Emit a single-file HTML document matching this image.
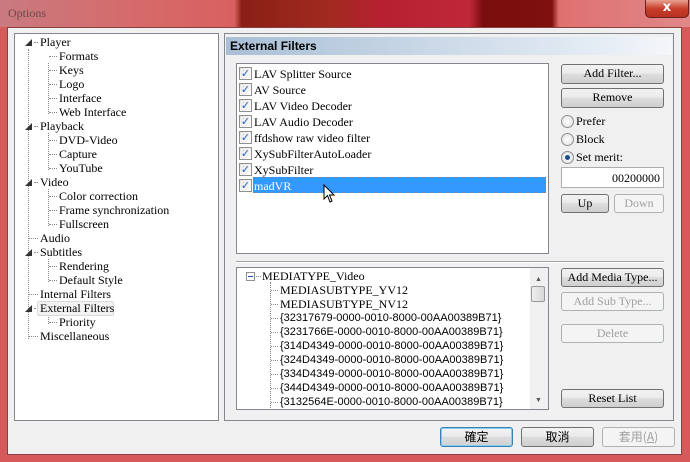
<!DOCTYPE html>
<html><head><meta charset="utf-8"><style>
*{margin:0;padding:0;box-sizing:border-box}
body{width:690px;height:462px;overflow:hidden;position:relative;font-family:"Liberation Serif","Noto Serif CJK SC",serif;font-size:12px;color:#000;background:#d65a5a}
.a{position:absolute}
.title{left:0;top:0;width:690px;height:27px;background:linear-gradient(90deg,#c97a80 0%,#d66a6a 20%,#d86060 34%,#8a1f16 35%,#a22a20 48%,#b52030 55%,#c02838 68%,#7a0d0d 70%,#801010 80%,#e07070 81%,#e08888 100%)}
.client{left:7px;top:27px;width:675px;height:428px;background:#f0f0f0;border:1px solid #8a4040}
.box{background:#fff;border:1px solid #828790}
.t{position:absolute;white-space:nowrap;line-height:14px}
.btn{position:absolute;border:1px solid #707070;border-radius:3px;background:linear-gradient(#f2f2f2 0%,#ebebeb 45%,#dddddd 50%,#cfcfcf 100%);text-align:center;line-height:17px;font-size:12px}
.dis{border-color:#adb2b5;background:#f4f4f4;color:#a0a0a0}
.cb{position:absolute;width:13px;height:13px;border:1px solid #8e8f8f;background:linear-gradient(135deg,#e6e6e6,#fff);font-size:11px;line-height:11px;color:#2c5fb8;text-align:center;font-weight:bold;font-family:"DejaVu Sans",sans-serif}
.rd{position:absolute;width:13px;height:13px;border-radius:50%;border:1px solid #8e8f8f;background:radial-gradient(#fff,#ddd)}
.dot{border-left:1px dotted #888}
.h{border-top:1px dotted #888;height:0}
</style></head><body>
<div class="a title"></div>
<div class="t" style="left:8px;top:6px;color:#6a4848;font-size:12px">Options</div>
<div class="a" style="left:645px;top:0;width:44px;height:18px;border:1px solid #6a2020;border-top:none;border-radius:0 0 5px 5px;background:linear-gradient(#e8a090,#c8402a 50%,#b83020);color:#fff;text-align:center;font:bold 13px 'DejaVu Sans',sans-serif;line-height:16px">x</div>
<div class="a client"></div>

<!-- left tree -->
<div class="a box" style="left:14px;top:33px;width:205px;height:388px"></div>
<div class="a dot" style="left:28px;top:49px;height:290px"></div>
<div class="a dot" style="left:48px;top:63px;height:51px"></div>
<div class="a dot" style="left:48px;top:133px;height:37px"></div>
<div class="a dot" style="left:48px;top:189px;height:37px"></div>
<div class="a dot" style="left:48px;top:259px;height:23px"></div>
<div class="a dot" style="left:48px;top:315px;height:9px"></div>
<div id="tree"></div>

<!-- right panel -->
<div class="a" style="left:224px;top:33px;width:450px;height:388px;border:1px solid #828790;background:#f0f0f0"></div>
<div class="a" style="left:226px;top:37px;width:446px;height:18px;background:linear-gradient(90deg,#a9bfd6,#e6edf5 85%,#f4f6f9)"></div>
<div class="t" style="left:230px;top:39px;font:bold 12px 'Liberation Sans',sans-serif">External Filters</div>

<div class="a box" style="left:236px;top:63px;width:313px;height:191px"></div>
<div class="a" style="left:253px;top:177px;width:293px;height:16px;background:#3399ff;border:1px dotted #d07020"></div>
<div id="list"></div>
<svg class="a" style="left:323px;top:184px" width="12" height="20" viewBox="0 0 12 20"><path d="M1 1 L1 15 L4.5 11.5 L7 18 L9 17 L6.5 11 L11 11 Z" fill="#fff" stroke="#000" stroke-width="1"/></svg>

<div class="a" style="left:236px;top:261px;width:428px;height:1px;background:#a0a0a0"></div>
<div class="a" style="left:236px;top:262px;width:428px;height:1px;background:#fff"></div>

<div class="a box" style="left:236px;top:267px;width:313px;height:143px"></div>
<div class="a" style="left:530px;top:268px;width:18px;height:141px;background:#f0f0f0"></div>
<div class="a" style="left:531px;top:286px;width:14px;height:16px;border:1px solid #999;border-radius:2px;background:linear-gradient(90deg,#eee,#d8d8d8)"></div>
<div class="t" style="left:535px;top:272px;font-size:7px;color:#555">▲</div>
<div class="t" style="left:535px;top:393px;font-size:7px;color:#555">▼</div>
<div class="a" style="left:246px;top:272px;width:9px;height:9px;border:1px solid #919191;background:#fff"></div>
<div class="a" style="left:248px;top:276px;width:5px;height:1px;background:#2050a0"></div>
<div class="a dot" style="left:270px;top:282px;height:128px"></div>
<div id="sub"></div>

<div class="btn" style="left:561px;top:64px;width:103px;height:20px">Add Filter...</div>
<div class="btn" style="left:561px;top:88px;width:103px;height:20px">Remove</div>
<div class="rd" style="left:561px;top:115px"></div><div class="t" style="left:576px;top:114px">Prefer</div>
<div class="rd" style="left:561px;top:133px"></div><div class="t" style="left:576px;top:132px">Block</div>
<div class="rd" style="left:561px;top:151px"></div><div class="a" style="left:565px;top:155px;width:5px;height:5px;border-radius:50%;background:#1a4f8f"></div><div class="t" style="left:576px;top:150px">Set merit:</div>
<div class="a" style="left:561px;top:167px;width:103px;height:21px;background:#fff;border:1px solid #abadb3"></div>
<div class="t" style="left:600px;top:171px;width:60px;text-align:right">00200000</div>
<div class="btn" style="left:561px;top:194px;width:48px;height:19px">Up</div>
<div class="btn dis" style="left:614px;top:194px;width:50px;height:19px">Down</div>
<div class="btn" style="left:561px;top:268px;width:103px;height:19px">Add Media Type...</div>
<div class="btn dis" style="left:561px;top:292px;width:103px;height:19px">Add Sub Type...</div>
<div class="btn dis" style="left:561px;top:324px;width:103px;height:19px">Delete</div>
<div class="btn" style="left:561px;top:389px;width:103px;height:19px">Reset List</div>

<div class="btn" style="left:440px;top:427px;width:73px;height:20px;border-color:#3c7fb1;box-shadow:inset 0 0 0 1px #7fd0f5;font-family:'Noto Sans CJK TC',sans-serif">確定</div>
<div class="btn" style="left:521px;top:427px;width:73px;height:20px;font-family:'Noto Sans CJK TC',sans-serif">取消</div>
<div class="btn dis" style="left:602px;top:427px;width:73px;height:20px;font-family:'Noto Sans CJK TC',sans-serif">套用(<u>A</u>)</div>

<script>
var tree=[[0,"Player",1],[1,"Formats"],[1,"Keys"],[1,"Logo"],[1,"Interface"],[1,"Web Interface"],[0,"Playback",1],[1,"DVD-Video"],[1,"Capture"],[1,"YouTube"],[0,"Video",1],[1,"Color correction"],[1,"Frame synchronization"],[1,"Fullscreen"],[0,"Audio"],[0,"Subtitles",1],[1,"Rendering"],[1,"Default Style"],[0,"Internal Filters"],[0,"External Filters",1],[1,"Priority"],[0,"Miscellaneous"]];
var h="";
tree.forEach(function(r,i){var y=35+i*14;var x=r[0]?59:40;
 if(r[0]) h+='<div class="a h" style="left:49px;top:'+(y+7)+'px;width:8px"></div>';
 else h+='<div class="a h" style="left:'+(r[2]?34:29)+'px;top:'+(y+7)+'px;width:'+(r[2]?4:9)+'px"></div>';
 if(r[2]) h+='<div class="t" style="left:25px;top:'+(y+1)+'px;font-size:7px;color:#333">◢</div>';
 if(r[1]=="External Filters") h+='<div class="a" style="left:37px;top:'+(y)+'px;width:77px;height:15px;border:1px solid #d9d9d9;border-radius:2px;background:#f2f2f2"></div>';
 h+='<div class="t" style="left:'+x+'px;top:'+y+'px">'+r[1]+'</div>';});
document.getElementById('tree').innerHTML=h;
var L=["LAV Splitter Source","AV Source","LAV Video Decoder","LAV Audio Decoder","ffdshow raw video filter","XySubFilterAutoLoader","XySubFilter","madVR"];
h="";L.forEach(function(s,i){var y=66+i*16;h+='<div class="cb" style="left:239px;top:'+(y+1)+'px">✓</div><div class="t" style="left:254px;top:'+(y+1)+'px;'+(i==7?'color:#fff':'')+'">'+s+'</div>';});
document.getElementById('list').innerHTML=h;
var S=["MEDIASUBTYPE_YV12","MEDIASUBTYPE_NV12","{32317679-0000-0010-8000-00AA00389B71}","{3231766E-0000-0010-8000-00AA00389B71}","{314D4349-0000-0010-8000-00AA00389B71}","{324D4349-0000-0010-8000-00AA00389B71}","{334D4349-0000-0010-8000-00AA00389B71}","{344D4349-0000-0010-8000-00AA00389B71}","{3132564E-0000-0010-8000-00AA00389B71}"];
h='<div class="a h" style="left:256px;top:276px;width:5px"></div><div class="t" style="left:262px;top:269px">MEDIATYPE_Video</div>';
S.forEach(function(s,i){var y=283+i*14;h+='<div class="a h" style="left:271px;top:'+(y+7)+'px;width:7px"></div><div class="t" style="left:280px;top:'+y+'px;'+(i>1?'font-family:Liberation Sans,sans-serif;font-size:11px':'')+'">'+s+'</div>';});
document.getElementById('sub').innerHTML=h;
</script>
</body></html>
